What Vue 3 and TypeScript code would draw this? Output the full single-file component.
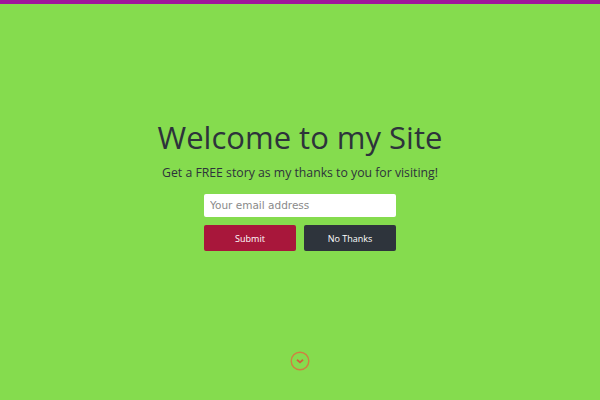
<script setup lang="ts">
import { ref } from "vue";

const email = ref("");
</script>

<template>
  <div class="page">
    <main class="welcome">
      <h1>Welcome to my Site</h1>
      <p>Get a FREE story as my thanks to you for visiting!</p>
      <form class="signup" @submit.prevent>
        <input v-model="email" type="email" placeholder="Your email address" />
        <div class="actions">
          <button class="submit" type="submit">Submit</button>
          <button class="dismiss" type="button">No Thanks</button>
        </div>
      </form>
    </main>
    <a class="scroll-down" href="#" aria-label="Scroll down">
      <svg width="20" height="20" viewBox="0 0 20 20" fill="none">
        <circle cx="10" cy="10" r="8.8" stroke="#d07f42" stroke-width="1.4" />
        <path d="M7 8.8 L10 11.4 L13 8.8" stroke="#d2603c" stroke-width="1.8" />
      </svg>
    </a>
  </div>
</template>

<style>
html,
body {
  margin: 0;
}
</style>

<style scoped>
.page {
  display: flex;
  flex-direction: column;
  align-items: center;
  box-sizing: border-box;
  height: 400px;
  overflow: hidden;
  background: #85dc4e;
  border-top: 4px solid #a0169c;
  font-family: "Open Sans", sans-serif;
  color: #2d333b;
}

.welcome {
  display: flex;
  flex-direction: column;
  align-items: center;
  padding-top: 110px;
}

h1 {
  margin: 0;
  font-size: 31px;
  line-height: 46px;
  font-weight: 400;
}

p {
  margin: 3px 0 0;
  font-size: 12.25px;
  line-height: 20px;
}

.signup {
  display: flex;
  flex-direction: column;
  gap: 8px;
  width: 192px;
  margin-top: 11px;
}

input {
  box-sizing: border-box;
  width: 100%;
  height: 23px;
  padding: 0 6px 2px;
  border: none;
  border-radius: 2px;
  background: #fff;
  font-family: "DejaVu Sans", sans-serif;
  font-size: 10.5px;
}

input::placeholder {
  color: #8a8a8a;
  opacity: 1;
}

.actions {
  display: flex;
  gap: 8px;
}

button {
  flex: 1;
  height: 26px;
  padding: 0;
  border: none;
  border-radius: 2px;
  font-family: "Open Sans", sans-serif;
  font-size: 9px;
  color: #fff;
}

.submit {
  background: #a8173b;
}

.dismiss {
  background: #2e343c;
}

.scroll-down {
  display: flex;
  margin-top: 100px;
}
</style>
